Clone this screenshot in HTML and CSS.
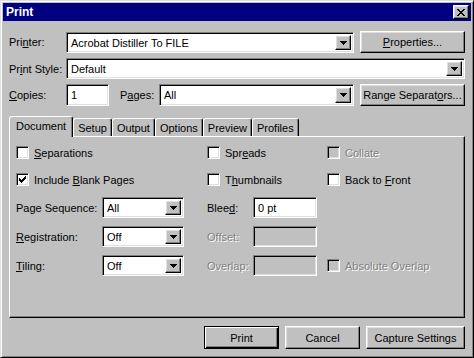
FILE: index.html
```html
<!DOCTYPE html>
<html lang="en">

<head>
    <meta charset="UTF-8">
    <title>Print</title>
    <link rel="stylesheet" href="styles.css">
</head>

<body>
    <div class="window">
        <div class="titlebar">
            <span class="title">Print</span>
            <button class="btn close">
                <svg width="8" height="7" viewBox="0 0 8 7" shape-rendering="crispEdges">
                    <path d="M0 0h2v1h-2z M6 0h2v1h-2z M1 1h2v1h-2z M5 1h2v1h-2z M2 2h4v1h-4z M3 3h2v1h-2z M2 4h4v1h-4z M1 5h2v1h-2z M5 5h2v1h-2z M0 6h2v1h-2z M6 6h2v1h-2z" fill="#000"/>
                </svg>
            </button>
        </div>

        <div class="dialog">
            <div class="row row-tall">
                <span class="lbl lbl-main">Pri<u>n</u>ter:</span>
                <div class="combo combo-printer">
                    <span class="value">Acrobat Distiller To FILE</span>
                    <span class="btn arrow"><svg width="7" height="4" viewBox="0 0 7 4" shape-rendering="crispEdges"><path d="M0 0h7v1h-1v1h-1v1h-1v1h-1v-1h-1v-1h-1v-1h-1z" fill="#000"/></svg></span>
                </div>
                <button class="btn btn-side"><u>P</u>roperties...</button>
            </div>

            <div class="row row-style">
                <span class="lbl lbl-main">Pr<u>i</u>nt Style:</span>
                <div class="combo combo-style">
                    <span class="value">Default</span>
                    <span class="btn arrow"><svg width="7" height="4" viewBox="0 0 7 4" shape-rendering="crispEdges"><path d="M0 0h7v1h-1v1h-1v1h-1v1h-1v-1h-1v-1h-1v-1h-1z" fill="#000"/></svg></span>
                </div>
            </div>

            <div class="row row-tall row-copies">
                <span class="lbl lbl-main"><u>C</u>opies:</span>
                <div class="field field-copies">1</div>
                <span class="lbl lbl-pages">P<u>a</u>ges:</span>
                <div class="combo combo-pages">
                    <span class="value">All</span>
                    <span class="btn arrow"><svg width="7" height="4" viewBox="0 0 7 4" shape-rendering="crispEdges"><path d="M0 0h7v1h-1v1h-1v1h-1v1h-1v-1h-1v-1h-1v-1h-1z" fill="#000"/></svg></span>
                </div>
                <button class="btn btn-side">Range Separat<u>o</u>rs...</button>
            </div>

            <div class="tabs">
                <span class="tab selected">Document</span>
                <span class="tab">Setup</span>
                <span class="tab">Output</span>
                <span class="tab">Options</span>
                <span class="tab">Preview</span>
                <span class="tab">Profiles</span>
            </div>

            <div class="panel">
                <div class="cell">
                    <span class="check"></span><span class="check-text"><u>S</u>eparations</span>
                </div>
                <div class="cell">
                    <span class="check"></span><span class="check-text">Spr<u>e</u>ads</span>
                </div>
                <div class="cell disabled">
                    <span class="check"></span><span class="check-text">Collate</span>
                </div>

                <div class="cell">
                    <span class="check">
                        <svg width="7" height="7" viewBox="0 0 7 7" shape-rendering="crispEdges"><path d="M6 0H7V3H6V4H5V5H4V6H3V7H2V6H1V5H0V2H1V3H2V4H3V3H4V2H5V1H6Z" fill="#000"/></svg>
                    </span><span class="check-text">Include <u>B</u>lank Pages</span>
                </div>
                <div class="cell">
                    <span class="check"></span><span class="check-text">T<u>h</u>umbnails</span>
                </div>
                <div class="cell">
                    <span class="check"></span><span class="check-text">Back to <u>F</u>ront</span>
                </div>

                <div class="cell">
                    <span class="lbl lbl-opt">Page Sequence:</span>
                    <div class="combo combo-opt">
                        <span class="value">All</span>
                        <span class="btn arrow"><svg width="7" height="4" viewBox="0 0 7 4" shape-rendering="crispEdges"><path d="M0 0h7v1h-1v1h-1v1h-1v1h-1v-1h-1v-1h-1v-1h-1z" fill="#000"/></svg></span>
                    </div>
                </div>
                <div class="cell">
                    <span class="lbl lbl-num">Blee<u>d</u>:</span>
                    <div class="field field-num">0 pt</div>
                </div>
                <div class="cell"></div>

                <div class="cell">
                    <span class="lbl lbl-opt"><u>R</u>egistration:</span>
                    <div class="combo combo-opt">
                        <span class="value">Off</span>
                        <span class="btn arrow"><svg width="7" height="4" viewBox="0 0 7 4" shape-rendering="crispEdges"><path d="M0 0h7v1h-1v1h-1v1h-1v1h-1v-1h-1v-1h-1v-1h-1z" fill="#000"/></svg></span>
                    </div>
                </div>
                <div class="cell disabled">
                    <span class="lbl lbl-num">Offset:</span>
                    <div class="field field-num"></div>
                </div>
                <div class="cell"></div>

                <div class="cell">
                    <span class="lbl lbl-opt"><u>T</u>iling:</span>
                    <div class="combo combo-opt">
                        <span class="value">Off</span>
                        <span class="btn arrow"><svg width="7" height="4" viewBox="0 0 7 4" shape-rendering="crispEdges"><path d="M0 0h7v1h-1v1h-1v1h-1v1h-1v-1h-1v-1h-1v-1h-1z" fill="#000"/></svg></span>
                    </div>
                </div>
                <div class="cell disabled">
                    <span class="lbl lbl-num">Overlap:</span>
                    <div class="field field-num"></div>
                </div>
                <div class="cell disabled">
                    <span class="check"></span><span class="check-text">Absolute Overlap</span>
                </div>
            </div>

            <div class="actions">
                <button class="btn btn-action btn-default">Print</button>
                <button class="btn btn-action">Cancel</button>
                <button class="btn btn-action btn-wide">Capture Settings</button>
            </div>
        </div>
    </div>
</body>

</html>
```

FILE: styles.css
```css
* {
    box-sizing: border-box;
}

body {
    margin: 0;
    background-color: #c0c0c0;
    font-family: "Liberation Sans", Arial, sans-serif;
    font-size: 11px;
    color: #000;
    overflow: hidden;
}

u {
    text-decoration: underline;
    text-underline-offset: 1px;
}

.window {
    width: 474px;
    height: 358px;
    background-color: #c0c0c0;
    border: 1px solid;
    border-color: #dfdfdf #000 #000 #dfdfdf;
    box-shadow: inset 1px 1px #fff, inset -1px -1px #808080;
    padding: 2px;
    display: flex;
    flex-direction: column;
}

.titlebar {
    height: 18px;
    background-color: #000080;
    color: #fff;
    font-weight: bold;
    font-size: 12px;
    display: flex;
    align-items: center;
    justify-content: space-between;
    padding: 0 2px 0 3px;
}

.btn {
    font-family: inherit;
    font-size: 11px;
    color: #000;
    background-color: #c0c0c0;
    border: 1px solid;
    border-color: #fff #000 #000 #fff;
    box-shadow: inset -1px -1px #808080, inset 1px 1px #dfdfdf;
    padding: 0;
    margin: 0;
    display: flex;
    align-items: center;
    justify-content: center;
}

.close {
    width: 16px;
    height: 14px;
}

.dialog {
    flex: 1;
    padding: 10px 6px 0 6px;
    display: flex;
    flex-direction: column;
}

.row {
    display: flex;
    align-items: center;
    height: 21px;
}

.row-tall {
    height: 22px;
}

.row-style,
.row-copies {
    margin-top: 5px;
}

.lbl {
    white-space: nowrap;
    flex-shrink: 0;
}

.lbl-main {
    width: 57px;
}

.lbl-pages {
    width: 39px;
    margin-left: 11px;
}

.combo,
.field {
    height: 21px;
    background-color: #fff;
    border: 1px solid;
    border-color: #808080 #fff #fff #808080;
    box-shadow: inset 1px 1px #000, inset -1px -1px #dfdfdf;
    padding: 2px;
    display: flex;
    align-items: center;
    flex-shrink: 0;
}

.value {
    padding-left: 2px;
    white-space: nowrap;
}

.arrow {
    width: 16px;
    height: 100%;
    margin-left: auto;
}

.combo-printer {
    width: 288px;
    margin-top: 1px;
}

.combo-style {
    width: 399px;
}

.field-copies {
    width: 43px;
    height: 22px;
    padding-left: 4px;
}

.combo-pages {
    width: 195px;
    height: 22px;
}

.btn-side {
    width: 105px;
    height: 22px;
    margin-left: 6px;
}

.tabs {
    display: flex;
    align-items: flex-end;
    height: 20px;
    margin-top: 10px;
}

.tab {
    height: 18px;
    padding: 0 4px;
    display: flex;
    align-items: center;
    border: 1px solid;
    border-bottom: none;
    border-color: #fff #000 transparent #fff;
    border-radius: 3px 3px 0 0;
    box-shadow: inset -1px 0 #808080;
    background-color: #c0c0c0;
}

.tab.selected {
    height: 21px;
    margin-bottom: -1px;
    padding: 0 6px 2px 6px;
    position: relative;
    z-index: 1;
}

.panel {
    height: 182px;
    border: 1px solid;
    border-color: #fff #000 #000 #fff;
    box-shadow: inset -1px -1px #808080;
    padding: 6px 0 0 6px;
    display: grid;
    grid-template-columns: 191px 120px 1fr;
    grid-template-rows: 19px 19px 21px 21px 21px;
    row-gap: 8px;
}

.cell {
    display: flex;
    align-items: center;
}

.check {
    width: 13px;
    height: 13px;
    background-color: #fff;
    border: 1px solid;
    border-color: #808080 #fff #fff #808080;
    box-shadow: inset 1px 1px #000, inset -1px -1px #dfdfdf;
    display: flex;
    align-items: center;
    justify-content: center;
    flex-shrink: 0;
}

.check-text {
    margin-left: 5px;
    white-space: nowrap;
}

.lbl-opt {
    width: 86px;
}

.combo-opt {
    width: 82px;
}

.lbl-num {
    width: 46px;
}

.field-num {
    width: 64px;
    padding-left: 4px;
}

.disabled {
    color: #808080;
    text-shadow: 1px 1px 0 #fff;
}

.disabled .check,
.disabled .field {
    background-color: #c0c0c0;
}

.actions {
    display: flex;
    justify-content: flex-end;
    gap: 6px;
    margin-top: 8px;
}

.btn-action {
    width: 75px;
    height: 23px;
}

.btn-wide {
    width: 99px;
}

.btn-default {
    border-color: #000;
    box-shadow: inset 1px 1px #fff, inset -1px -1px #000, inset -2px -2px #808080;
}
```
